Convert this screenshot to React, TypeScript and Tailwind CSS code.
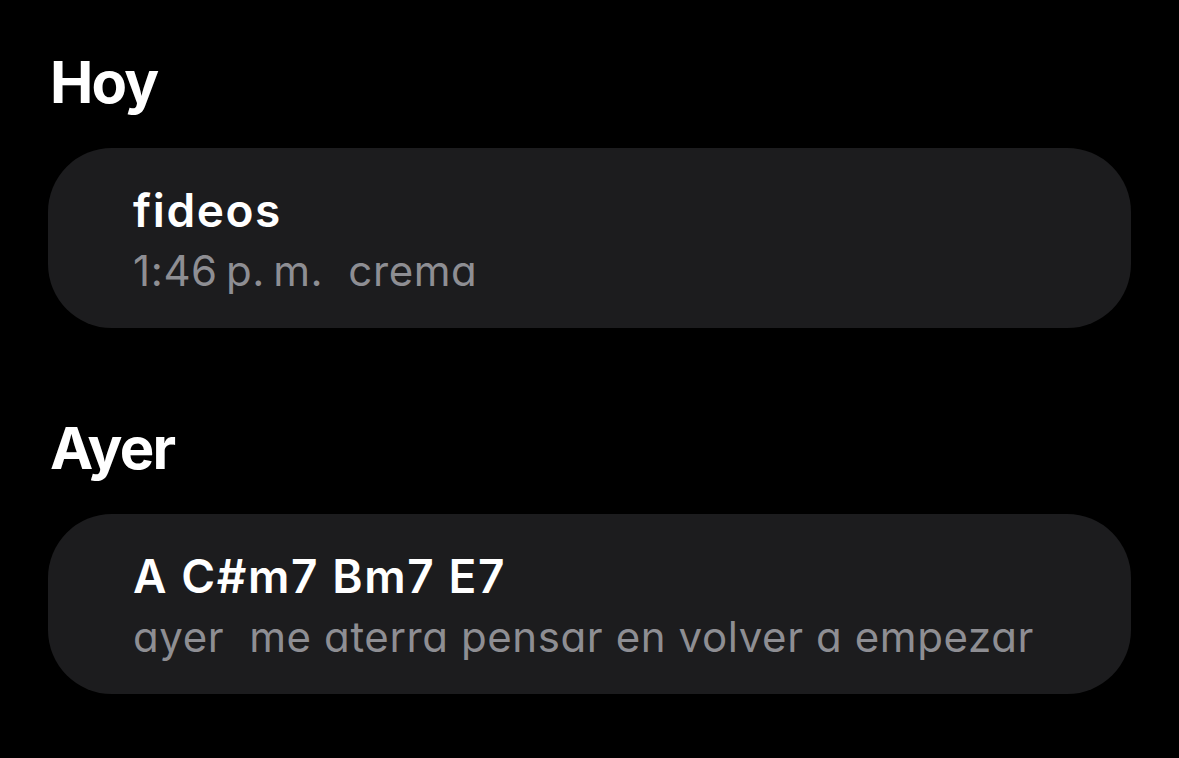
const sections = [
  {
    label: "Hoy",
    notes: [{ title: "fideos", date: "1:46\u202Fp.\u202Fm.", preview: "crema" }],
  },
  {
    label: "Ayer",
    notes: [
      {
        title: "A C#m7 Bm7 E7",
        date: "ayer",
        preview: "me aterra pensar en volver a empezar",
      },
    ],
  },
];

function NoteCard({ title, date, preview }: { title: string; date: string; preview: string }) {
  return (
    <div className="h-[180px] rounded-[64px] bg-[#1c1c1e] pl-[85px] pt-[34px]">
      <p className="text-[46px] leading-[56px] font-semibold tracking-[1.6px] text-white">{title}</p>
      <p className="mt-[3px] whitespace-nowrap text-[42px] leading-[60px] tracking-[0.6px] text-[#8e8e93] [font-feature-settings:'cv11']">
        <span>{date}</span>
        <span className="ml-[25px]">{preview}</span>
      </p>
    </div>
  );
}

export default function App() {
  return (
    <div
      className="min-h-[758px] w-[1179px] bg-black pl-[48px] pr-[48px] pt-[53px]"
      style={{ fontFamily: "Inter, 'Noto Sans', sans-serif" }}
    >
      {sections.map((section, i) => (
        <section key={section.label} className={i > 0 ? "mt-[91px]" : ""}>
          <h2 className="pl-[2px] text-[58px] leading-[58px] font-bold tracking-[-1.8px] text-white">
            {section.label}
          </h2>
          <div className="mt-[37px] flex flex-col gap-4">
            {section.notes.map((note) => (
              <NoteCard key={note.title} {...note} />
            ))}
          </div>
        </section>
      ))}
    </div>
  );
}
